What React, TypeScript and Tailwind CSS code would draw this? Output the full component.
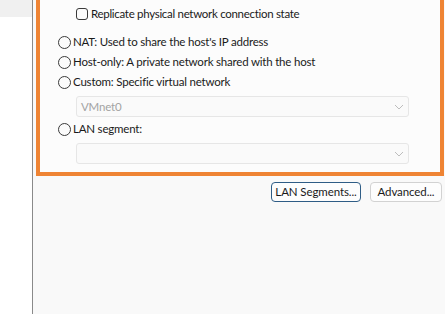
import React from "react";

const Radio = ({ label }: { label: string }) => (
  <div className="flex h-[20px] items-center pl-[18px]">
    <span className="h-[13px] w-[13px] shrink-0 rounded-full border border-[#3a3a3a] bg-[#fbfbfb]" />
    <span className="ml-[2px] whitespace-nowrap text-[11.5px] leading-none tracking-[-0.2px] text-[#1a1a1a]">{label}</span>
  </div>
);

const Chevron = () => (
  <svg width="10" height="6" viewBox="0 0 10 6" className="mr-[4px]">
    <polyline points="1,1 5,5 9,1" fill="none" stroke="#bdbdbd" strokeWidth="1" />
  </svg>
);

const Dropdown = ({ value }: { value?: string }) => (
  <div className="ml-[36px] flex h-[21px] w-[333px] items-center justify-between rounded-[3px] border border-[#e6e6e6] bg-[#fafafa] pl-[4px]">
    <span className="text-[11.5px] leading-none tracking-[-0.2px] text-[#a3a3a3]">{value ?? ""}</span>
    <Chevron />
  </div>
);

export default function App() {
  return (
    <div
      className="flex h-[314px] w-[445px] overflow-hidden bg-[#f9f9f9]"
      style={{ fontFamily: 'Lato, "Segoe UI", sans-serif' }}
    >
      <div className="flex w-[32px] shrink-0 flex-col bg-white">
        <div className="h-[17px] bg-[#f0f0f0]" />
      </div>
      <div className="w-px shrink-0 bg-[#8a8a8a]" />
      <div className="flex w-[412px] shrink-0 flex-col pl-[3px]">
        <div className="flex w-[408px] flex-col border-x-4 border-b-4 border-[#ef8434] bg-[#fcfcfc] pb-[8px]">
          <div className="mt-[4px] flex h-[20px] items-center pl-[36px]">
            <span className="h-[12px] w-[12px] shrink-0 rounded-[3px] border border-[#3a3a3a] bg-[#fbfbfb]" />
            <span className="ml-[3px] whitespace-nowrap text-[11.5px] leading-none tracking-[-0.3px] text-[#1a1a1a]">
              Replicate physical network connection state
            </span>
          </div>
          <div className="mt-[8px] flex flex-col">
            <Radio label="NAT: Used to share the host's IP address" />
            <Radio label="Host-only: A private network shared with the host" />
            <Radio label="Custom: Specific virtual network" />
          </div>
          <div className="mt-[4px]">
            <Dropdown value="VMnet0" />
          </div>
          <div className="mt-[2px]">
            <Radio label="LAN segment:" />
          </div>
          <div className="mt-[4px]">
            <Dropdown />
          </div>
        </div>
        <div className="mt-[6px] flex justify-end gap-[9px] pr-[3px]">
          <button className="flex h-[20px] w-[90px] items-center justify-center whitespace-nowrap rounded-[4px] border border-[#2f5d86] bg-[#fdfdfd] text-[11.5px] leading-none tracking-[-0.1px] text-[#1a1a1a]">
            LAN Segments...
          </button>
          <button className="flex h-[20px] w-[72px] items-center justify-center whitespace-nowrap rounded-[4px] border border-[#d2d2d2] bg-[#fdfdfd] text-[11.5px] leading-none tracking-[-0.1px] text-[#1a1a1a]">
            Advanced...
          </button>
        </div>
      </div>
    </div>
  );
}
